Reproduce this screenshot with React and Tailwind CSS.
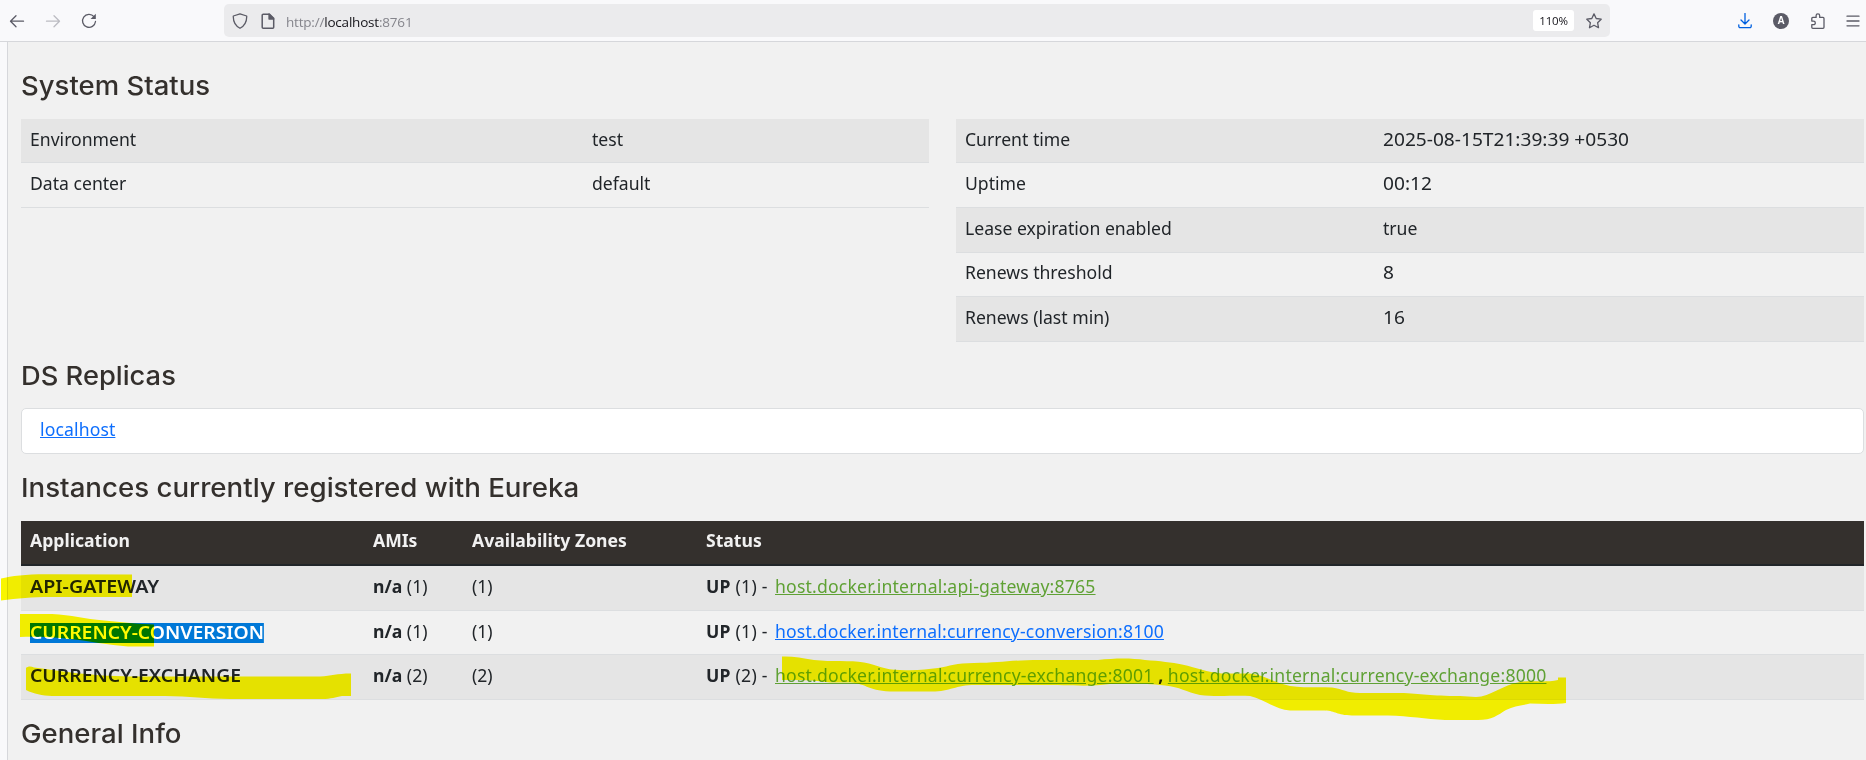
import React from "react";

const Icon = ({ className, children, size = 16 }) => (
  <svg
    width={size}
    height={size}
    viewBox="0 0 16 16"
    fill="none"
    stroke="currentColor"
    strokeWidth="1.3"
    strokeLinecap="round"
    strokeLinejoin="round"
    className={`shrink-0 ${className ?? ""}`}
  >
    {children}
  </svg>
);

function Toolbar() {
  return (
    <header className="flex h-[42px] items-center border-b border-[#d6d7db] bg-[#f9f9fb] pl-[9px] text-[#5b5b66]">
      <Icon>
        <path d="M14.5 8.2H1.5M7 2.7 1.5 8.2 7 13.7" />
      </Icon>
      <Icon className="ml-5 text-[#bcbcc2]">
        <path d="M1.5 8.2h13M9 2.7l5.500 5.500L9 13.700" />
      </Icon>
      <Icon className="ml-5">
        <path d="M13 3.600A6.500 6.500 0 1 0 14.500 8.500" />
        <path d="M14.800 .8v5.200H9.600z" fill="currentColor" stroke="none" />
      </Icon>
      <div className="ml-[127px] flex h-[33px] w-[1386px] items-center rounded-[5px] bg-[#ebebed] pl-2">
        <Icon>
          <path d="M8 .8 14.700 3c.2 5.500-1.700 9.500-6.700 12.300C3 12.500 1.100 8.500 1.300 3z" />
        </Icon>
        <Icon className="ml-3">
          <path strokeWidth="1.5" d="M3.200 1.200h6.300l4.200 4.200v8.800a1 1 0 0 1-1 1H3.200a1 1 0 0 1-1-1v-12a1 1 0 0 1 1-1z" />
          <path d="M9 1v5h4.700z" fill="currentColor" />
        </Icon>
        <div className="ml-[10px] mt-[2px] font-['Open_Sans',sans-serif] text-[13.500px] leading-5 tracking-[-0.2px] text-[#85858c]">
          http://<span className="text-[#15141a]">localhost</span>:8761
        </div>
        <div className="ml-auto flex h-[21px] w-[41px] items-center justify-center rounded-[3px] bg-white pt-px font-['Open_Sans',sans-serif] text-[11.5px] tracking-[-0.2px] text-[#15141a]">
          110%
        </div>
        <Icon className="ml-3 mr-2">
          <path d="m8 .9 2.200 4.600 5 .7-3.600 3.500.9 5L8 12.300l-4.500 2.400.9-5L.8 6.200l5-.7z" />
        </Icon>
      </div>
      <Icon className="ml-auto text-[#0060df]">
        <path d="M8 .4v10.400M4 7l4 4 4-4M1.800 11.800v1.500a1.300 1.300 0 0 0 1.300 1.300h9.800a1.300 1.300 0 0 0 1.300-1.300v-1.500" />
      </Icon>
      <div className="ml-[20px] flex size-4 items-center justify-center rounded-full bg-[#5b5b66] font-['Liberation_Sans',sans-serif] text-[10px] font-bold text-white">
        A
      </div>
      <Icon className="ml-[21px]">
        <path d="M1.800 5.400a1 1 0 0 1 1-1h3.300V2.700a1.800 1.800 0 0 1 3.600 0v1.700h3.300a1 1 0 0 1 1 1v8.900a1 1 0 0 1-1 1H2.800a1 1 0 0 1-1-1v-2.600h1.700a1.800 1.800 0 0 0 0-3.600H1.800z" />
      </Icon>
      <Icon className="ml-[19px] mr-[5px]">
        <path d="M2 3.200h12M2 8h12M2 12.800h12" />
      </Icon>
    </header>
  );
}

const Heading = ({ className, children }) => (
  <h1 className={`origin-left self-start whitespace-nowrap font-['Inter',sans-serif] text-[26px] font-medium leading-8 text-[#34302d] ${className}`}>
    {children}
  </h1>
);

const InfoRow = ({ label, value, className, labelWidth, valueClass }) => (
  <div className={`flex items-start border-b border-[#dcdee0] pl-[9px] leading-6 ${className}`}>
    <div className={labelWidth}>{label}</div>
    <div className={`origin-left ${valueClass ?? ""}`}>{value}</div>
  </div>
);

const instances = [
  {
    name: <span className="inline-block origin-left scale-x-[1.118]">API-GATEWAY</span>,
    count: 1,
    row: "h-[45px] bg-[#e5e5e5]",
    links: <a className="tracking-[0.19px] text-[#5fa134] underline">host.docker.internal:api-gateway:8765</a>,
  },
  {
    name: (
      <span className="relative top-px inline-block h-5 origin-left scale-x-[1.098] bg-[#0078d7] leading-[18px] text-white">
        CURRENCY-CONVERSION
      </span>
    ),
    count: 1,
    row: "h-[44px] bg-[#f1f1f1]",
    links: <a className="tracking-[0.17px] text-[#0d6efd] underline">host.docker.internal:currency-conversion:8100</a>,
  },
  {
    name: <span className="inline-block origin-left scale-x-[1.1]">CURRENCY-EXCHANGE</span>,
    count: 2,
    row: "h-[45px] bg-[#e5e5e5]",
    links: (
      <>
        <a className="tracking-[0.2px] text-[#5fa134] underline">host.docker.internal:currency-exchange:8001</a>
        <b> , </b>
        <a className="tracking-[0.2px] text-[#5fa134] underline">host.docker.internal:currency-exchange:8000</a>
      </>
    ),
  },
];

const columns = "grid grid-cols-[343px_99px_234px_1fr] pl-[9px]";

function Highlights() {
  return (
    <svg
      className="pointer-events-none absolute left-0 top-0 mix-blend-multiply"
      width="1866"
      height="760"
      viewBox="0 0 1866 760"
      fill="#fffb00"
    >
      <path d="M1 578.500C12 576 28 574 50 574.300L132 574.500V597H50C32 597 18 598.500 1 600.500Z" />
      <path d="M20 614H52C72 615 84 619 104 620.500C122 622 138 624 154 624.500V646.500H128C108 645 90 641 66 638.500C50 637 36 636.500 20 637Z" />
      <path d="M26 668C28 666 31 666 34 667.500C60 671 90 676 130 676.500H320C332 676 336 673.500 351 673.500V696H342C335 697 332 699 322 699H230C205 699 190 696 165 696H52C42 695.500 34 694 26 690Z" />
      <path d="M782 656.500C792 656 802 658 814 660C832 662 850 660 864 662.500C878 665 884 670 900 670C916 671 926 669.500 938 668C950 666 956 663 974 663C1000 663 1010 660 1040 660H1098C1115 658 1132 658 1145 660C1160 661 1172 662.500 1182 664.500C1198 668 1206 672 1222 673.500H1250C1265 675 1274 683 1290 686C1304 688 1318 687 1332 687.500C1344 689 1346 693 1360 693H1400C1422 693.500 1430 696 1460 696L1476 697C1490 697 1504 684 1520 682C1532 680 1544 683 1558 680V677.500H1566V703C1556 704.500 1542 704 1530 703.500C1520 706 1514 706 1506 710C1498 715 1492 720 1478 720H1445C1425 719 1410 716 1388 715.500H1352C1336 715 1336 711 1325 710.500H1290C1274 709 1264 699 1250 696C1236 695 1216 697 1200 695C1186 692 1180 687 1165 685.500C1140 683 1130 684 1110 684C1090 687 1070 685 1040 685H975C955 685 950 692 930 691.500H890C866 690.500 866 682 845 682.500H830C812 680 800 680 782 680Z" />
    </svg>
  );
}

export default function App() {
  return (
    <div className="relative h-[760px] w-[1866px] overflow-hidden bg-[#f1f1f1] font-['Noto_Sans',sans-serif] text-[17.6px] text-[#212529]">
      <Toolbar />
      <div className="flex">
        <div className="h-[718px] w-[8px] shrink-0 border-r border-[#d6d7db] bg-[#f9f9fb]" />
        <main className="flex w-[1856px] flex-col pl-[13px]">
          <Heading className="mt-[28px] scale-x-[1.058]">System Status</Heading>
          <div className="mt-[17px] flex items-start justify-between">
            <div className="w-[908px]">
              <InfoRow label="Environment" value="test" className="h-[44px] bg-[#e5e5e5] pt-2" labelWidth="w-[562px]" />
              <InfoRow label="Data center" value="default" className="h-[45px] pt-2" labelWidth="w-[562px]" />
            </div>
            <div className="w-[908px]">
              <InfoRow label="Current time" value="2025-08-15T21:39:39 +0530" className="h-[44px] bg-[#e5e5e5] pt-2" labelWidth="w-[418px]" valueClass="scale-x-[1.087]" />
              <InfoRow label="Uptime" value="00:12" className="h-[45px] pt-2" labelWidth="w-[418px]" valueClass="scale-x-[1.087]" />
              <InfoRow label="Lease expiration enabled" value="true" className="h-[45px] bg-[#e5e5e5] pt-2" labelWidth="w-[418px]" />
              <InfoRow label="Renews threshold" value="8" className="h-[44px] pt-[7px]" labelWidth="w-[418px]" valueClass="scale-x-[1.087]" />
              <InfoRow label="Renews (last min)" value="16" className="h-[45px] bg-[#e5e5e5] pt-2" labelWidth="w-[418px]" valueClass="scale-x-[1.087]" />
            </div>
          </div>

          <Heading className="mt-[18px] scale-x-[1.050]">DS Replicas</Heading>
          <div className="mt-[16px] flex h-[46px] items-start rounded-[5px] border border-[#dcdee0] bg-white pl-[18px] pt-[8px] leading-6">
            <a className="tracking-[0.12px] text-[#0d6efd] underline">localhost</a>
          </div>

          <Heading className="mt-[18px] scale-x-[1.064]">Instances currently registered with Eureka</Heading>
          <div className="mt-[17px]">
            <div className={`${columns} h-[45px] border-b-2 border-[#212529] bg-[#34302d] pt-[7px] font-bold leading-6 text-[#f1f1f1]`}>
              <div>Application</div>
              <div>AMIs</div>
              <div>Availability Zones</div>
              <div>Status</div>
            </div>
            {instances.map((item, i) => (
              <div key={i} className={`${columns} ${item.row} border-b border-[#dcdee0] pt-2 leading-6`}>
                <div className="font-semibold">{item.name}</div>
                <div><b>n/a</b> ({item.count})</div>
                <div>({item.count})</div>
                <div className="flex whitespace-pre">
                  <div className="w-[69px] tracking-[0.25px]"><b>UP</b> ({item.count}) -</div>
                  <div>{item.links}</div>
                </div>
              </div>
            ))}
          </div>

          <Heading className="mt-[18px] scale-x-[1.060]">General Info</Heading>
        </main>
      </div>
      <Highlights />
    </div>
  );
}
